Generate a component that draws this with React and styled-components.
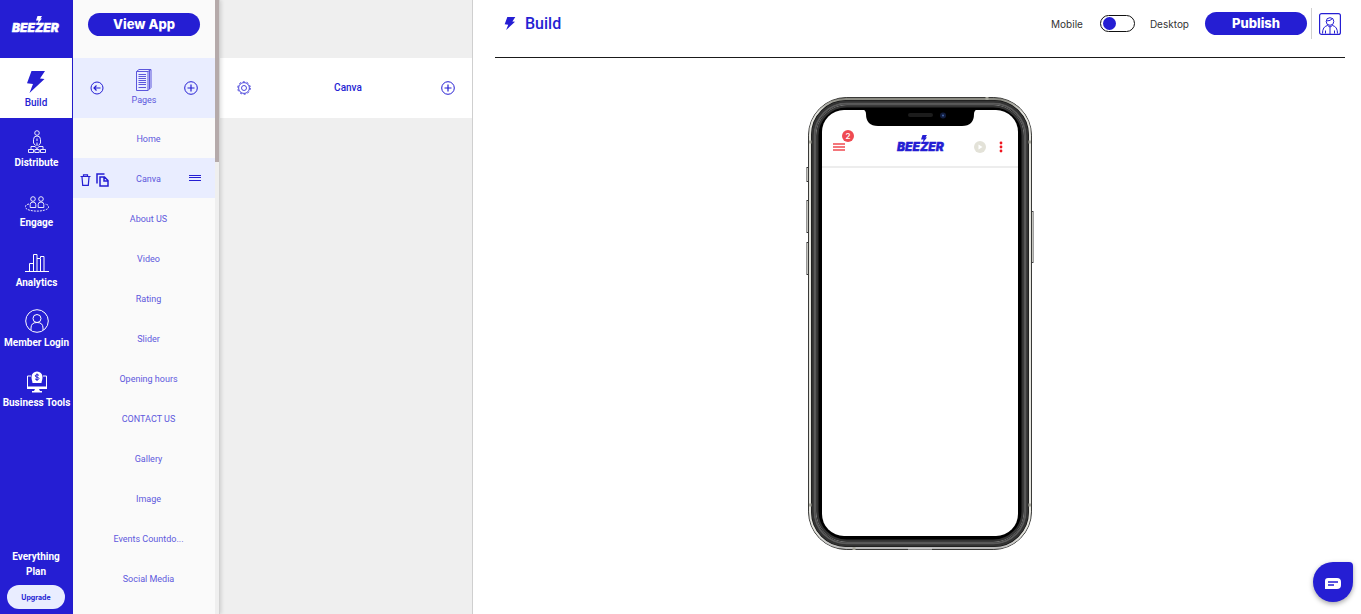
import React, { useState } from 'react';
import styled, { createGlobalStyle } from 'styled-components';

const blue = '#251ed3';
const pale = '#e9edff';
const ui = "Roboto, 'Liberation Sans', sans-serif";
const wide = "Inter, 'Liberation Sans', sans-serif";

const Global = createGlobalStyle`
  *, *::before, *::after { box-sizing: border-box; }
  body { margin: 0; background: #fff; color: #333; font-family: ${ui}; }
  button { font: inherit; color: inherit; background: none; border: 0; padding: 0; cursor: pointer; }
  a { color: inherit; text-decoration: none; }
  ul { list-style: none; margin: 0; padding: 0; }
  svg { display: block; flex: none; }
`;

const Shell = styled.div`
  display: grid;
  grid-template-columns: 73px 147px 253px 1fr;
  height: 100vh;
  overflow: hidden;
`;

/* Left navigation */
const Sidebar = styled.nav`
  display: flex;
  flex-direction: column;
  background: ${blue};
  color: #fff;
`;
const Brand = styled.a`
  display: flex;
  height: 58px;
  padding: 16px 0 0 11px;
`;
const NavLink = styled.a`
  display: flex;
  flex-direction: column;
  align-items: center;
  justify-content: flex-end;
  gap: 3px;
  height: 60px;
  padding-bottom: 8px;
  margin-right: ${(p) => (p.$active ? '1px' : '0')};
  background: ${(p) => (p.$active ? '#fff' : 'transparent')};
  color: ${(p) => (p.$active ? blue : '#fff')};
  font-size: 10px;
  font-weight: ${(p) => (p.$active ? 500 : 700)};
  line-height: 14px;
  white-space: nowrap;
`;
const Plan = styled.div`
  display: flex;
  flex-direction: column;
  align-items: center;
  gap: 6px;
  margin-top: auto;
  padding: 0 9px 5px 8px;
  font-size: 10px;
  font-weight: 700;
  line-height: 15px;
  text-align: center;
`;
const UpgradeButton = styled.button`
  width: 58px;
  height: 24px;
  border-radius: 12px;
  background: ${pale};
  color: ${blue};
  font-family: ${wide};
  font-size: 7px;
  font-weight: 700;
`;

/* Pages list */
const PagesPanel = styled.section`
  display: grid;
  grid-template-columns: minmax(0, 1fr) 4px;
  border-right: 1px solid #d2d2d2;
  background: #fafafa;
  overflow: hidden;
  z-index: 1;
  box-shadow: 1px 0 4px rgba(0, 0, 0, 0.15);
`;
const Track = styled.div`
  background: #efefef;
`;
const Thumb = styled.div`
  height: 162px;
  background: #b5aaaa;
`;
const PanelTop = styled.div`
  display: flex;
  justify-content: center;
  align-items: flex-start;
  height: 58px;
  padding-top: 13px;
`;
const PillButton = styled.button`
  width: ${(p) => p.$width};
  height: 23px;
  border-radius: 12px;
  background: ${blue};
  color: #fff;
  font-family: ${wide};
  font-size: 13px;
  font-weight: 800;
  line-height: 23px;
`;
const PagesHeader = styled.header`
  display: flex;
  align-items: center;
  justify-content: space-between;
  height: 60px;
  padding: 0 17px;
  background: ${pale};
  color: ${blue};
`;
const PagesTitle = styled.h2`
  display: flex;
  flex-direction: column;
  align-items: center;
  gap: 2px;
  margin: 0;
  font-size: 9px;
  font-weight: 400;
  line-height: 14px;
  color: #5c57dc;
`;
const PageRow = styled.li`
  display: grid;
  grid-template-columns: 26px minmax(0, 1fr) 14px;
  align-items: center;
  height: 40px;
  padding: 0 14px 0 7px;
  background: ${(p) => (p.$active ? pale : 'transparent')};
  color: ${blue};
`;
const RowTools = styled.div`
  display: flex;
  align-items: center;
  gap: 5px;
  padding-top: 3px;
`;
const PageLink = styled.a`
  grid-column: 2;
  padding: 2px 0 0 4px;
  color: #5e59dd;
  font-size: 9px;
  line-height: 14px;
  text-align: center;
  white-space: nowrap;
`;
const DragButton = styled.button`
  justify-self: end;
`;

/* Page editor column */
const Editor = styled.section`
  border-right: 1px solid #cfcfcf;
  background: #efefef;
`;
const EditorHeader = styled.header`
  display: flex;
  align-items: center;
  justify-content: space-between;
  height: 60px;
  margin-top: 58px;
  padding: 0 17px;
  background: #fff;
  color: ${blue};
`;
const EditorTitle = styled.h2`
  margin: 0;
  padding-left: 4px;
  font-size: 10px;
  font-weight: 500;
  line-height: 14px;
`;

/* Main work area */
const Main = styled.main`
  display: flex;
  flex-direction: column;
  min-width: 0;
`;
const TopBar = styled.header`
  display: flex;
  align-items: center;
  height: 58px;
  margin: 0 16px 0 22px;
  padding: 0 4px 10px 8px;
  border-bottom: 1px solid #1a1a1a;
`;
const Title = styled.h1`
  display: flex;
  align-items: center;
  gap: 8px;
  margin: 0 auto 0 0;
  color: ${blue};
  font-size: 16px;
  font-weight: 500;
  line-height: 20px;
`;
const Switch = styled.label`
  display: flex;
  align-items: center;
  gap: 15px;
  color: #333;
  font-family: ${wide};
  font-size: 10px;
  line-height: 14px;
`;
const Toggle = styled.input`
  appearance: none;
  display: flex;
  align-items: center;
  width: 35px;
  height: 17px;
  margin: 0 0 0 2px;
  padding: 0 2px;
  border: 1px solid #111;
  border-radius: 9px;
  justify-content: ${(p) => (p.checked ? 'flex-end' : 'flex-start')};
  &::before {
    content: '';
    width: 13px;
    height: 13px;
    border-radius: 50%;
    background: ${blue};
  }
`;
const Account = styled.div`
  display: flex;
  align-items: center;
  height: 31px;
  margin-left: 4px;
  padding-left: 7px;
  border-left: 1px solid #d0d0d0;
  color: ${blue};
`;
const Spacer = styled.div`
  margin-left: 16px;
`;
const Stage = styled.div`
  display: flex;
  flex: 1;
  justify-content: center;
  margin: 0 16px 0 22px;
  padding-top: 38px;
`;

/* Device preview */
const Phone = styled.div`
  position: relative;
  width: 228px;
  height: 455px;
  padding: 13px 16px 15px;
`;
const FrameArt = styled.svg`
  position: absolute;
  inset: 0;
`;
const Screen = styled.div`
  position: relative;
  height: 426px;
  border-radius: 22px;
`;
const AppBar = styled.div`
  display: flex;
  align-items: center;
  height: 59px;
  padding: 18px 15px 0 11px;
  border-bottom: 2px solid #ededed;
  color: #f04a50;
`;
const MenuButton = styled.button`
  position: relative;
`;
const Badge = styled.span`
  position: absolute;
  left: 9px;
  top: -13px;
  width: 12px;
  height: 12px;
  border-radius: 50%;
  background: #ef4a52;
  color: #fff;
  font-family: ${wide};
  font-size: 8px;
  font-weight: 600;
  line-height: 12px;
  text-align: center;
`;
const AppLogo = styled.div`
  margin: 0 auto;
  padding: 0 0 5px 24px;
  color: ${blue};
`;
const AppTools = styled.div`
  display: flex;
  align-items: center;
  gap: 13px;
`;
const ChatButton = styled.button`
  position: fixed;
  right: 8px;
  bottom: 12px;
  display: flex;
  align-items: center;
  justify-content: center;
  width: 40px;
  height: 40px;
  padding-top: 3px;
  border-radius: 20px 4px 20px 20px;
  background: ${blue};
  color: #fff;
  box-shadow: 0 2px 5px rgba(0, 0, 0, 0.35);
`;

const Bolt = ({ w, h }) => (
  <svg width={w} height={h} viewBox="0 0 18 22" fill="currentColor" aria-hidden="true">
    <path d="M4.500 0H18l-5 7.500 4.500.5L2.500 22l3.500-9L0 12.300z" />
  </svg>
);

const Logo = () => (
  <svg width="52" height="18" viewBox="0 0 52 18" aria-label="Beezer" role="img">
    <text x="1" y="16" fontFamily="Inter, sans-serif" fontWeight="900" fontStyle="italic" fontSize="12" fill="currentColor" stroke="currentColor" strokeWidth="0.400">BEEZER</text>
    <path d="M26.500 0h4.500l-1.500 2.500H31L26.500 8l1-3.500H25z" fill="currentColor" />
  </svg>
);

const Line = ({ w, h = w, sw = 1, children }) => (
  <svg width={w} height={h} viewBox={`0 0 ${w} ${h}`} fill="none" stroke="currentColor" strokeWidth={sw} aria-hidden="true">
    {children}
  </svg>
);

const DistributeIcon = () => (
  <Line w={18} h={23} sw={0.9}>
    <circle cx="9" cy="3" r="2.300" />
    <path d="M5.500 13V9.500q0-3.500 3.500-3.500t3.500 3.500V13M9 8.500v2.500M9 12.500v2M5.500 13l1.500 2M12.500 13L11 15M9 14.500l-2 2 2 2 2-2zM3 19.500v-3h4M11 16.500h4v3M9 18v1.500" />
    <path d="M.5 19.500h5v3h-5zM6.800 19.500h4.400v3H6.800zM12.500 19.500h5v3h-5z" />
  </Line>
);
const EngageIcon = () => (
  <Line w={24} h={18} sw={0.9}>
    <circle cx="8" cy="4" r="2.300" />
    <circle cx="16" cy="4" r="2.300" />
    <path d="M5.200 12.500V9.500Q5.200 7 8 7t2.800 2.500v3zM13.200 12.500V9.500Q13.200 7 16 7t2.800 2.500v3z" />
    <path d="M4 9C-1 10-1 13.500 4 15c5 1.500 11 1.500 16 0 5-1.500 5-5 0-6" strokeDasharray="2 1" />
  </Line>
);
const AnalyticsIcon = () => (
  <Line w={24} h={20}>
    <path d="M0 18.500h24M4.500 18V10.500h4M8.500 18V1.500h3.500V18M12 5.500h3.500V18M15.500 5V3.500h3.500V18" />
  </Line>
);
const MemberIcon = () => (
  <Line w={24}>
    <circle cx="12" cy="12" r="11.300" />
    <circle cx="12" cy="9.500" r="4" />
    <path d="M6 21v-2q0-5.500 6-5.500t6 5.500v2" />
  </Line>
);
const BusinessIcon = () => (
  <svg width="22" height="22" viewBox="0 0 22 22" fill="none" aria-hidden="true">
    <path d="M5 5H1.500v12h19V5H17" stroke="#fff" />
    <path d="M1 15.500h20V18H1zM9 18h4l1 2h2v1.500H6V20h2z" fill="#fff" />
    <path d="M5.500 6a5.500 5.500 0 0 1 11 0c0 3-1 4-1 6h-9c0-2-1-3-1-6z" fill="#fff" />
    <path d="M13 4.500c-.5-1-3.800-1.200-3.800.4 0 1.700 3.800.9 3.800 2.600 0 1.600-3.300 1.500-4 .2M11 2.500v7.500" stroke={blue} />
  </svg>
);
const PlusCircle = () => (
  <Line w={14}>
    <circle cx="7" cy="7" r="6.300" />
    <path d="M7 3.500v7M3.500 7h7" strokeWidth="1.200" />
  </Line>
);
const BackCircle = () => (
  <Line w={14}>
    <circle cx="7" cy="7" r="6" />
    <path d="M10.500 7H4M6.500 4.500L4 7l2.500 2.500" strokeWidth="1.200" />
  </Line>
);
const PagesIcon = () => (
  <Line w={16} h={22}>
    <path d="M.5 2.500h11.500v19H.5zM.5 2.500L3 .5h12v18l-3 3M12 2.500l3-2M13.500 2v18" />
    <path d="M2.500 5.500H10M2.500 7.500H10M2.500 9.500H10M2.500 11.500H10M2.500 13.500H10M2.500 15.500H10M2.500 18.500H10" />
  </Line>
);
const TrashIcon = () => (
  <Line w={11} h={12}>
    <path d="M.5 2.500h10M3.500 2V.800h4V2M2 3l.7 8.300h5.600L9 3" strokeWidth="1.200" />
  </Line>
);
const CopyIcon = () => (
  <Line w={13} h={14}>
    <path d="M1 10.500V1h7.500M4 4h4.500L12 7.500V13H4zM8 4.500V8h4" strokeWidth="1.500" />
  </Line>
);
const GearIcon = () => (
  <Line w={14} sw={0.8}>
    <circle cx="7" cy="7" r="5.400" />
    <circle cx="7" cy="7" r="2.500" />
    <circle cx="7" cy="7" r="6.300" strokeDasharray="2 1.960" />
  </Line>
);
const AccountIcon = () => (
  <Line w={22}>
    <rect x=".6" y=".6" width="20.800" height="20.800" rx="2" strokeWidth="1.200" />
    <circle cx="11" cy="8.500" r="3.800" />
    <path d="M7.500 8q4 0 6-2.500M3.500 20.500q0-7 5-8l2.500 1.500 2.500-1.500q5 1 5 8M11 14v7M6.500 20.500v-3M15.500 20.500v-3" />
  </Line>
);

const PhoneArt = () => (
  <FrameArt width="228" height="455" viewBox="0 0 228 455" fill="none" aria-hidden="true">
    <defs>
      <linearGradient id="rim" x1="0" y1="0" x2="0" y2="1">
        <stop offset="0" stopColor="#8a8a82" />
        <stop offset=".03" stopColor="#e4e4de" />
        <stop offset=".97" stopColor="#e4e4de" />
        <stop offset="1" stopColor="#bbb" />
      </linearGradient>
    </defs>
    <path d="M1.500 71v15M1.500 104v33M1.500 146v33" stroke="#333" strokeWidth="2" />
    <path d="M1.500 72v13M1.500 105v31M1.500 147v31" stroke="#c4c4be" />
    <path d="M226.500 115v52" stroke="#444" strokeWidth="2" />
    <path d="M226.500 116v50" stroke="#c4c4be" />
    <rect x="2.500" y="1.500" width="223" height="452" rx="38" fill="#111" stroke="#3a3a38" />
    <rect x="4" y="3" width="220" height="449" rx="36" stroke="url(#rim)" strokeWidth="2" />
    <path d="M181 1v3M48 451v3M3 46h3M222 46h3M3 409h3M222 409h3" stroke="#a5a59b" strokeWidth="3" />
    <path d="M102 453h24" stroke="#ddd" />
    <rect x="6.500" y="5.500" width="215" height="444" rx="34" stroke="#333" strokeWidth="2" />
    <rect x="8.500" y="7.500" width="211" height="440" rx="32" stroke="#5a5a5a" strokeWidth="2" />
    <rect x="10" y="9" width="208" height="437" rx="31" stroke="#7a7a7a" />
    <rect x="11.500" y="10.500" width="205" height="434" rx="29" fill="#000" stroke="#333" strokeWidth="2" />
    <rect x="16" y="14" width="196" height="426" rx="22" fill="#fff" />
    <path d="M56 13q4 1 4 5 0 12 12 12h84q12 0 12-12 0-4 4-5z" fill="#000" />
    <rect x="102" y="17" width="25" height="4" rx="2" fill="#1c1c1c" />
    <circle cx="137" cy="19.500" r="3" fill="#111c3d" />
    <circle cx="137" cy="19.500" r="1" fill="#4267a8" />
  </FrameArt>
);

const NAV = [
  ['Build', <Bolt w={18} h={22} />],
  ['Distribute', <DistributeIcon />],
  ['Engage', <EngageIcon />],
  ['Analytics', <AnalyticsIcon />],
  ['Member Login', <MemberIcon />],
  ['Business Tools', <BusinessIcon />],
];
const PAGES = ['Home', 'Canva', 'About US', 'Video', 'Rating', 'Slider', 'Opening hours', 'CONTACT US', 'Gallery', 'Image', 'Events Countdo...', 'Social Media'];

export default function App() {
  const [desktop, setDesktop] = useState(false);
  return (
    <>
      <Global />
      <Shell>
        <Sidebar>
          <Brand href="#"><Logo /></Brand>
          {NAV.map(([name, icon], i) => (
            <NavLink key={name} href="#" $active={i === 0}>{icon}{name}</NavLink>
          ))}
          <Plan>
            <span>Everything Plan</span>
            <UpgradeButton>Upgrade</UpgradeButton>
          </Plan>
        </Sidebar>

        <PagesPanel>
          <div>
            <PanelTop><PillButton $width="112px">View App</PillButton></PanelTop>
            <PagesHeader>
              <button aria-label="Back"><BackCircle /></button>
              <PagesTitle><PagesIcon />Pages</PagesTitle>
              <button aria-label="Add page"><PlusCircle /></button>
            </PagesHeader>
            <ul>
              {PAGES.map((page) => {
                const active = page === 'Canva';
                return (
                  <PageRow key={page} $active={active}>
                    {active && (
                      <RowTools>
                        <button aria-label="Delete"><TrashIcon /></button>
                        <button aria-label="Duplicate"><CopyIcon /></button>
                      </RowTools>
                    )}
                    <PageLink href="#">{page}</PageLink>
                    {active && (
                      <DragButton aria-label="Reorder">
                        <Line w={12} h={6}><path d="M0 .5h12M0 2.500h12M0 5.500h12" /></Line>
                      </DragButton>
                    )}
                  </PageRow>
                );
              })}
            </ul>
          </div>
          <Track><Thumb /></Track>
        </PagesPanel>

        <Editor>
          <EditorHeader>
            <button aria-label="Settings"><GearIcon /></button>
            <EditorTitle>Canva</EditorTitle>
            <button aria-label="Add element"><PlusCircle /></button>
          </EditorHeader>
        </Editor>

        <Main>
          <TopBar>
            <Title><Bolt w={14} h={13} />Build</Title>
            <Switch>
              Mobile
              <Toggle type="checkbox" checked={desktop} onChange={(e) => setDesktop(e.target.checked)} />
              Desktop
            </Switch>
            <Spacer><PillButton $width="102px">Publish</PillButton></Spacer>
            <Account><button aria-label="Account"><AccountIcon /></button></Account>
          </TopBar>
          <Stage>
            <Phone>
              <PhoneArt />
              <Screen>
                <AppBar>
                  <MenuButton aria-label="Menu">
                    <Line w={12} h={8}><path d="M0 1h12M0 4h12M0 7h12" strokeWidth="1.500" /></Line>
                    <Badge>2</Badge>
                  </MenuButton>
                  <AppLogo><Logo /></AppLogo>
                  <AppTools>
                    <svg width="12" height="12" viewBox="0 0 12 12" aria-hidden="true">
                      <circle cx="6" cy="6" r="6" fill="#e3e2d8" />
                      <path d="M4.500 3.500L8.500 6l-4 2.500z" fill="#fff" />
                    </svg>
                    <svg width="4" height="12" viewBox="0 0 4 12" fill="#f0151f" aria-hidden="true">
                      <circle cx="2" cy="2" r="1.400" /><circle cx="2" cy="6" r="1.400" /><circle cx="2" cy="10" r="1.400" />
                    </svg>
                  </AppTools>
                </AppBar>
              </Screen>
            </Phone>
          </Stage>
        </Main>
      </Shell>
      <ChatButton aria-label="Chat">
        <svg width="16" height="12" viewBox="0 0 16 12" aria-hidden="true">
          <path d="M3 0h9q4 0 4 4v3q0 4-4 4H0V3q0-3 3-3z" fill="currentColor" />
          <path d="M3 4h10M3 7h6" stroke={blue} strokeWidth="1.500" />
        </svg>
      </ChatButton>
    </>
  );
}
